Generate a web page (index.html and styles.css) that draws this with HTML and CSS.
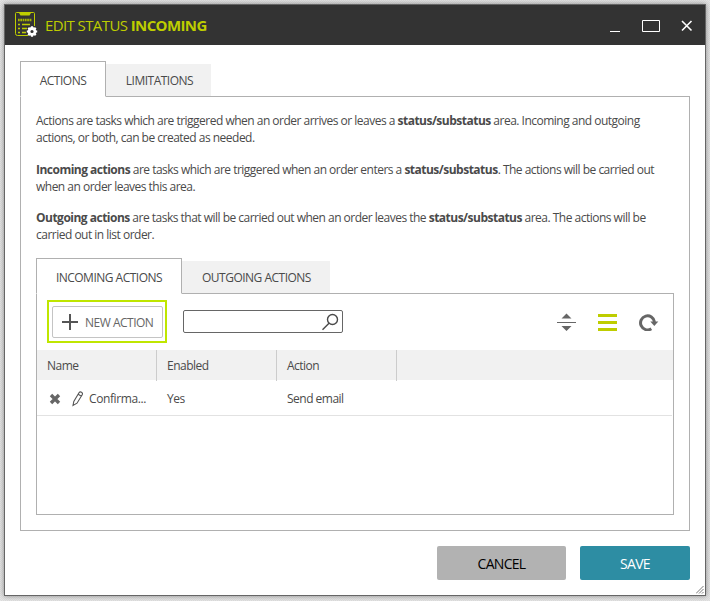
FILE: index.html
```html
<!DOCTYPE html>
<html lang="en">
<head>
<meta charset="utf-8">
<title>Edit status Incoming</title>
<link rel="stylesheet" href="styles.css">
</head>
<body>
<section class="window">
  <header class="titlebar">
    <svg class="logo" width="23" height="26" viewBox="0 0 23 26">
      <path d="M13 23.500H2.500a2 2 0 0 1-2-2V1.500a1 1 0 0 1 1-1h17a1 1 0 0 1 1 1V14" fill="none" stroke="#becd00"/>
      <path d="M4 1h12l-1.500 2.500h-9z" fill="#becd00"/>
      <path d="M3 8h14" stroke="#a9b600" stroke-width="2.600" stroke-dasharray="1.700 .6"/>
      <path d="M3 12.500h2M7 12.500h8M3 16.500h2M7 16.500h5M3 20.500h2M7 20.500h4" stroke="#becd00" stroke-width="1.300"/>
      <circle cx="17" cy="19.500" r="3" fill="none" stroke="#fff" stroke-width="2.800"/>
      <path d="M17 14.300v2M17 22.700v2M11.800 19.500h2M20.200 19.500h2M13.300 15.800l1.400 1.400M19.300 21.800l1.400 1.400M13.300 23.200l1.400-1.400M19.300 17.200l1.400-1.400" stroke="#fff" stroke-width="2.200"/>
    </svg>
    <h1 class="title">EDIT STATUS <b>INCOMING</b></h1>
    <svg class="controls" width="84" height="14" viewBox="0 0 84 14" fill="none" stroke="#fff">
      <path d="M0 12.500h10"/><path d="M32.500 1.500h17v11h-17z"/><path d="M72 2l9.500 9.500M81.500 2l-9.500 9.500" stroke-width="1.600"/>
    </svg>
  </header>
  <main class="content">
    <nav class="tabs">
      <a class="tab active t-actions">ACTIONS</a>
      <a class="tab t-limits">LIMITATIONS</a>
    </nav>
    <div class="panel outer">
      <p>Actions are tasks which are triggered when an order arrives or leaves a <b>status/substatus</b> area. Incoming and outgoing<br>actions, or both, can be created as needed.</p>
      <p><b>Incoming actions</b> are tasks which are triggered when an order enters a <b>status/substatus</b>. The actions will be carried out<br>when an order leaves this area.</p>
      <p><b>Outgoing actions</b> are tasks that will be carried out when an order leaves the <b>status/substatus</b> area. The actions will be<br>carried out in list order.</p>
      <nav class="tabs">
        <a class="tab active t-in">INCOMING ACTIONS</a>
        <a class="tab t-out">OUTGOING ACTIONS</a>
      </nav>
      <div class="panel inner">
        <div class="toolbar">
          <div class="highlight">
            <button class="new-action">
              <svg width="16" height="16" viewBox="0 0 16 16"><path d="M8 0v16M0 8h16" stroke="#555" stroke-width="2"/></svg>
              <span>NEW ACTION</span>
            </button>
          </div>
          <div class="search">
            <svg width="18" height="18" viewBox="0 0 18 18" fill="none" stroke="#4a4a4a"><circle cx="11.500" cy="6.500" r="5" stroke-width="1.400"/><path d="M8 10.200L1.500 16.700" stroke-width="1.400"/></svg>
          </div>
          <div class="tools">
            <svg width="19" height="18" viewBox="0 0 19 18"><path d="M0 9.500h19" stroke="#666"/><path d="M9.500 .5l5 5h-10zM9.500 18l5-5h-10z" fill="#666"/></svg>
            <svg width="19" height="18" viewBox="0 0 19 18"><path d="M0 2.500h19M0 9.500h19M0 16.500h19" stroke="#becd00" stroke-width="3"/></svg>
            <svg width="20" height="18" viewBox="0 0 20 18"><path d="M12.300 15.800A7 7 0 1 1 15.500 9" fill="none" stroke="#666" stroke-width="3"/><path d="M11.300 8.500h8L15.300 13z" fill="#666"/></svg>
          </div>
        </div>
        <div class="grid head">
          <span>Name</span><span>Enabled</span><span>Action</span><span></span>
        </div>
        <div class="grid row">
          <span class="name">
            <svg width="12" height="12" viewBox="0 0 12 12"><path d="M2 2l8 8M10 2l-8 8" stroke="#666" stroke-width="3.400"/></svg>
            <svg class="pencil" width="11" height="16" viewBox="0 0 11 16" fill="none" stroke="#555"><path d="M1 14.500l.8-4L7 1.800q1-1.500 2.500-.6t.7 2.500L5 12.200zM6.200 3.200l3.200 2" stroke-width="1.100"/></svg>
            <i>Confirma...</i>
          </span><span>Yes</span><span>Send email</span><span></span>
        </div>
      </div>
    </div>
    <footer class="buttons">
      <button class="btn cancel">CANCEL</button>
      <button class="btn save">SAVE</button>
    </footer>
  </main>
  <svg class="grip" width="8" height="8" viewBox="0 0 8 8"><path d="M0 7.500L7.500 0M3 7.500L7.500 3M6 7.500L7.500 6" stroke="#555" stroke-width=".8"/></svg>
</section>
</body>
</html>
```
FILE: styles.css
```css
* { box-sizing: border-box; }
body {
  margin: 0;
  height: 601px;
  padding: 4px;
  overflow: hidden;
  background: repeating-conic-gradient(#dcdcdc 0 25%, #e6e6e6 0 50%) 0 0 / 2px 2px;
  font-family: "Open Sans", sans-serif;
  font-size: 12px;
  line-height: 17px;
  letter-spacing: -0.508px;
  color: #4a4a4a;
}
svg { display: block; flex: none; }
.window {
  position: relative;
  width: 702px;
  height: 592px;
  border: 1px solid #666;
  background: #fff;
  box-shadow: 0 0 5px rgba(0, 0, 0, .4);
}
.titlebar {
  display: flex;
  align-items: center;
  height: 40px;
  padding: 0 13px 0 10px;
  background: #333;
}
.title {
  margin: 0 auto 1px 7px;
  font-size: 15px;
  line-height: 20px;
  font-weight: 400;
  letter-spacing: -0.6px;
  color: #becd00;
}
.controls { margin-top: 1px; margin-right: -2px; }
.content { padding: 16px 15px 0; }
.tabs {
  position: relative;
  display: flex;
  align-items: flex-end;
  height: 36px;
  margin-bottom: -1px;
}
.tab {
  height: 33px;
  background: #f1f1f1;
  text-align: center;
  line-height: 33px;
  border-bottom: 1px solid #b0b0b0;
}
.tab.active {
  height: 36px;
  border: 1px solid #b0b0b0;
  border-bottom-color: #fff;
  background: #fff;
  line-height: 37px;
}
.t-actions { width: 86px; }
.t-limits { width: 105px; padding-left: 2px; }
.t-in { width: 146px; }
.t-out { width: 148px; padding-left: 1px; }
.panel { border: 1px solid #b0b0b0; }
.outer { height: 435px; padding: 15px; }
.outer p { margin: 0 0 15px; height: 34px; white-space: nowrap; }
.outer p:nth-child(2) { margin-bottom: 14px; }
.inner { height: 222px; }
.toolbar { display: flex; align-items: center; height: 56px; padding: 0 14px 0 10px; }
.highlight { width: 120px; height: 43px; margin-top: -1px; padding: 4px 2px 0 3px; border: 2px solid #bfe600; }
.new-action {
  display: flex;
  align-items: center;
  width: 111px;
  height: 32px;
  padding: 0 0 0 9px;
  gap: 7px;
  border: 1px solid #c4c4c4;
  border-radius: 2px;
  background: #fff;
  color: #666;
  font: inherit;
  letter-spacing: -0.5px;
}
.search {
  display: flex;
  justify-content: flex-end;
  width: 160px;
  height: 23px;
  margin-left: 16px;
  margin-top: -1px;
  padding: 2px 3px 0 0;
  border: 1px solid #666;
  border-radius: 2px;
}
.tools { display: flex; gap: 22px; margin-left: auto; margin-top: -1px; }
.grid { display: grid; grid-template-columns: 120px 120px 120px 1fr; }
.head { height: 30px; background: #f1f1f1; line-height: 31px; }
.head span { padding-left: 10px; border-right: 1px solid #ccc; }
.head span:last-child { border: 0; }
.row { height: 36px; margin-right: 1px; line-height: 37px; border-bottom: 1px solid #e2e2e2; }
.row > span { padding-left: 10px; }
.row .name { display: flex; align-items: center; padding-left: 12px; }
.name i { font-style: normal; margin-left: 6px; letter-spacing: -0.4px; }
.pencil { margin-left: 11px; }
.buttons { display: flex; justify-content: flex-end; gap: 14px; padding-top: 15px; }
.btn { height: 34px; padding: 0; border: 0; border-radius: 2px; font: 14px "Open Sans", sans-serif; letter-spacing: -0.7px; }
.cancel { width: 129px; background: #b2b2b2; color: #000; }
.save { width: 110px; background: #2d8da3; color: #fff; }
.grip { position: absolute; right: 1px; bottom: 1px; }
```
